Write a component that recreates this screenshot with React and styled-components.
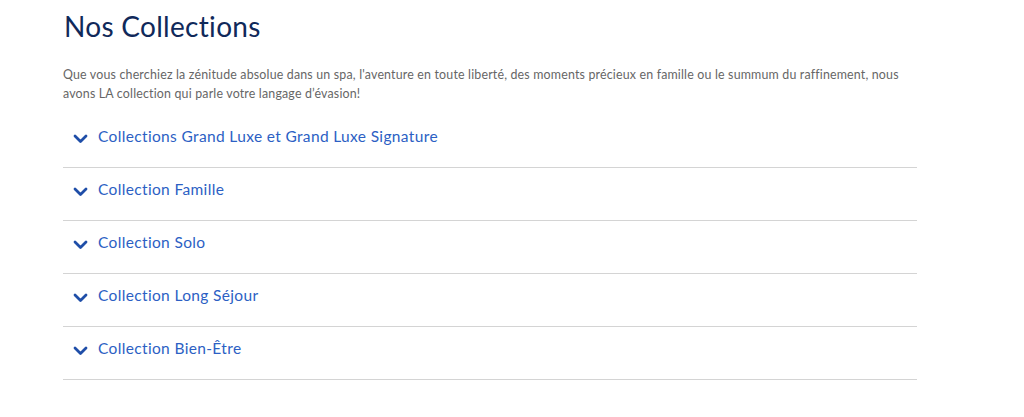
import React from "react"
import styled, { createGlobalStyle } from "styled-components"

const GlobalStyle = createGlobalStyle`
  body {
    margin: 0;
    background: #ffffff;
    font-family: "Lato", "Liberation Sans", sans-serif;
  }
`

const Section = styled.section`
  width: 854px;
  padding: 8px 0 0 63px;
`

const Title = styled.h2`
  margin: 0 0 0 1px;
  font-size: 28px;
  line-height: 36px;
  font-weight: 400;
  color: #10295a;
  letter-spacing: 0.3px;
`

const Intro = styled.p`
  margin: 21px 0 0 0;
  font-size: 12.4px;
  line-height: 19px;
  color: #666666;
  letter-spacing: 0.18px;
`

const List = styled.div`
  margin-top: 12px;
`

const Item = styled.div`
  display: flex;
  align-items: center;
  gap: 10px;
  height: 20px;
  padding: 11px 0 21px 10px;
  border-bottom: 1px solid #d4d4d4;
`

const Label = styled.span`
  font-size: 15.5px;
  color: #2c5fc4;
  letter-spacing: 0.35px;
`

const Chevron = () => (
  <svg width="15" height="10" viewBox="0 0 15 10" style={{ marginTop: 5 }}>
    <path d="M2 2 L7.5 7.5 L13 2" fill="none" stroke="#1f4ea8" strokeWidth="2.8" strokeLinecap="round" strokeLinejoin="round" />
  </svg>
)

const items = [
  "Collections Grand Luxe et Grand Luxe Signature",
  "Collection Famille",
  "Collection Solo",
  "Collection Long Séjour",
  "Collection Bien-Être",
]

const App = () => (
  <>
    <GlobalStyle />
    <Section>
      <Title>Nos Collections</Title>
      <Intro>
        Que vous cherchiez la zénitude absolue dans un spa, l'aventure en toute liberté, des moments précieux en famille ou le summum du raffinement, nous avons LA collection qui parle votre langage d’évasion!
      </Intro>
      <List>
        {items.map(label => (
          <Item key={label}>
            <Chevron />
            <Label>{label}</Label>
          </Item>
        ))}
      </List>
    </Section>
  </>
)

export default App
